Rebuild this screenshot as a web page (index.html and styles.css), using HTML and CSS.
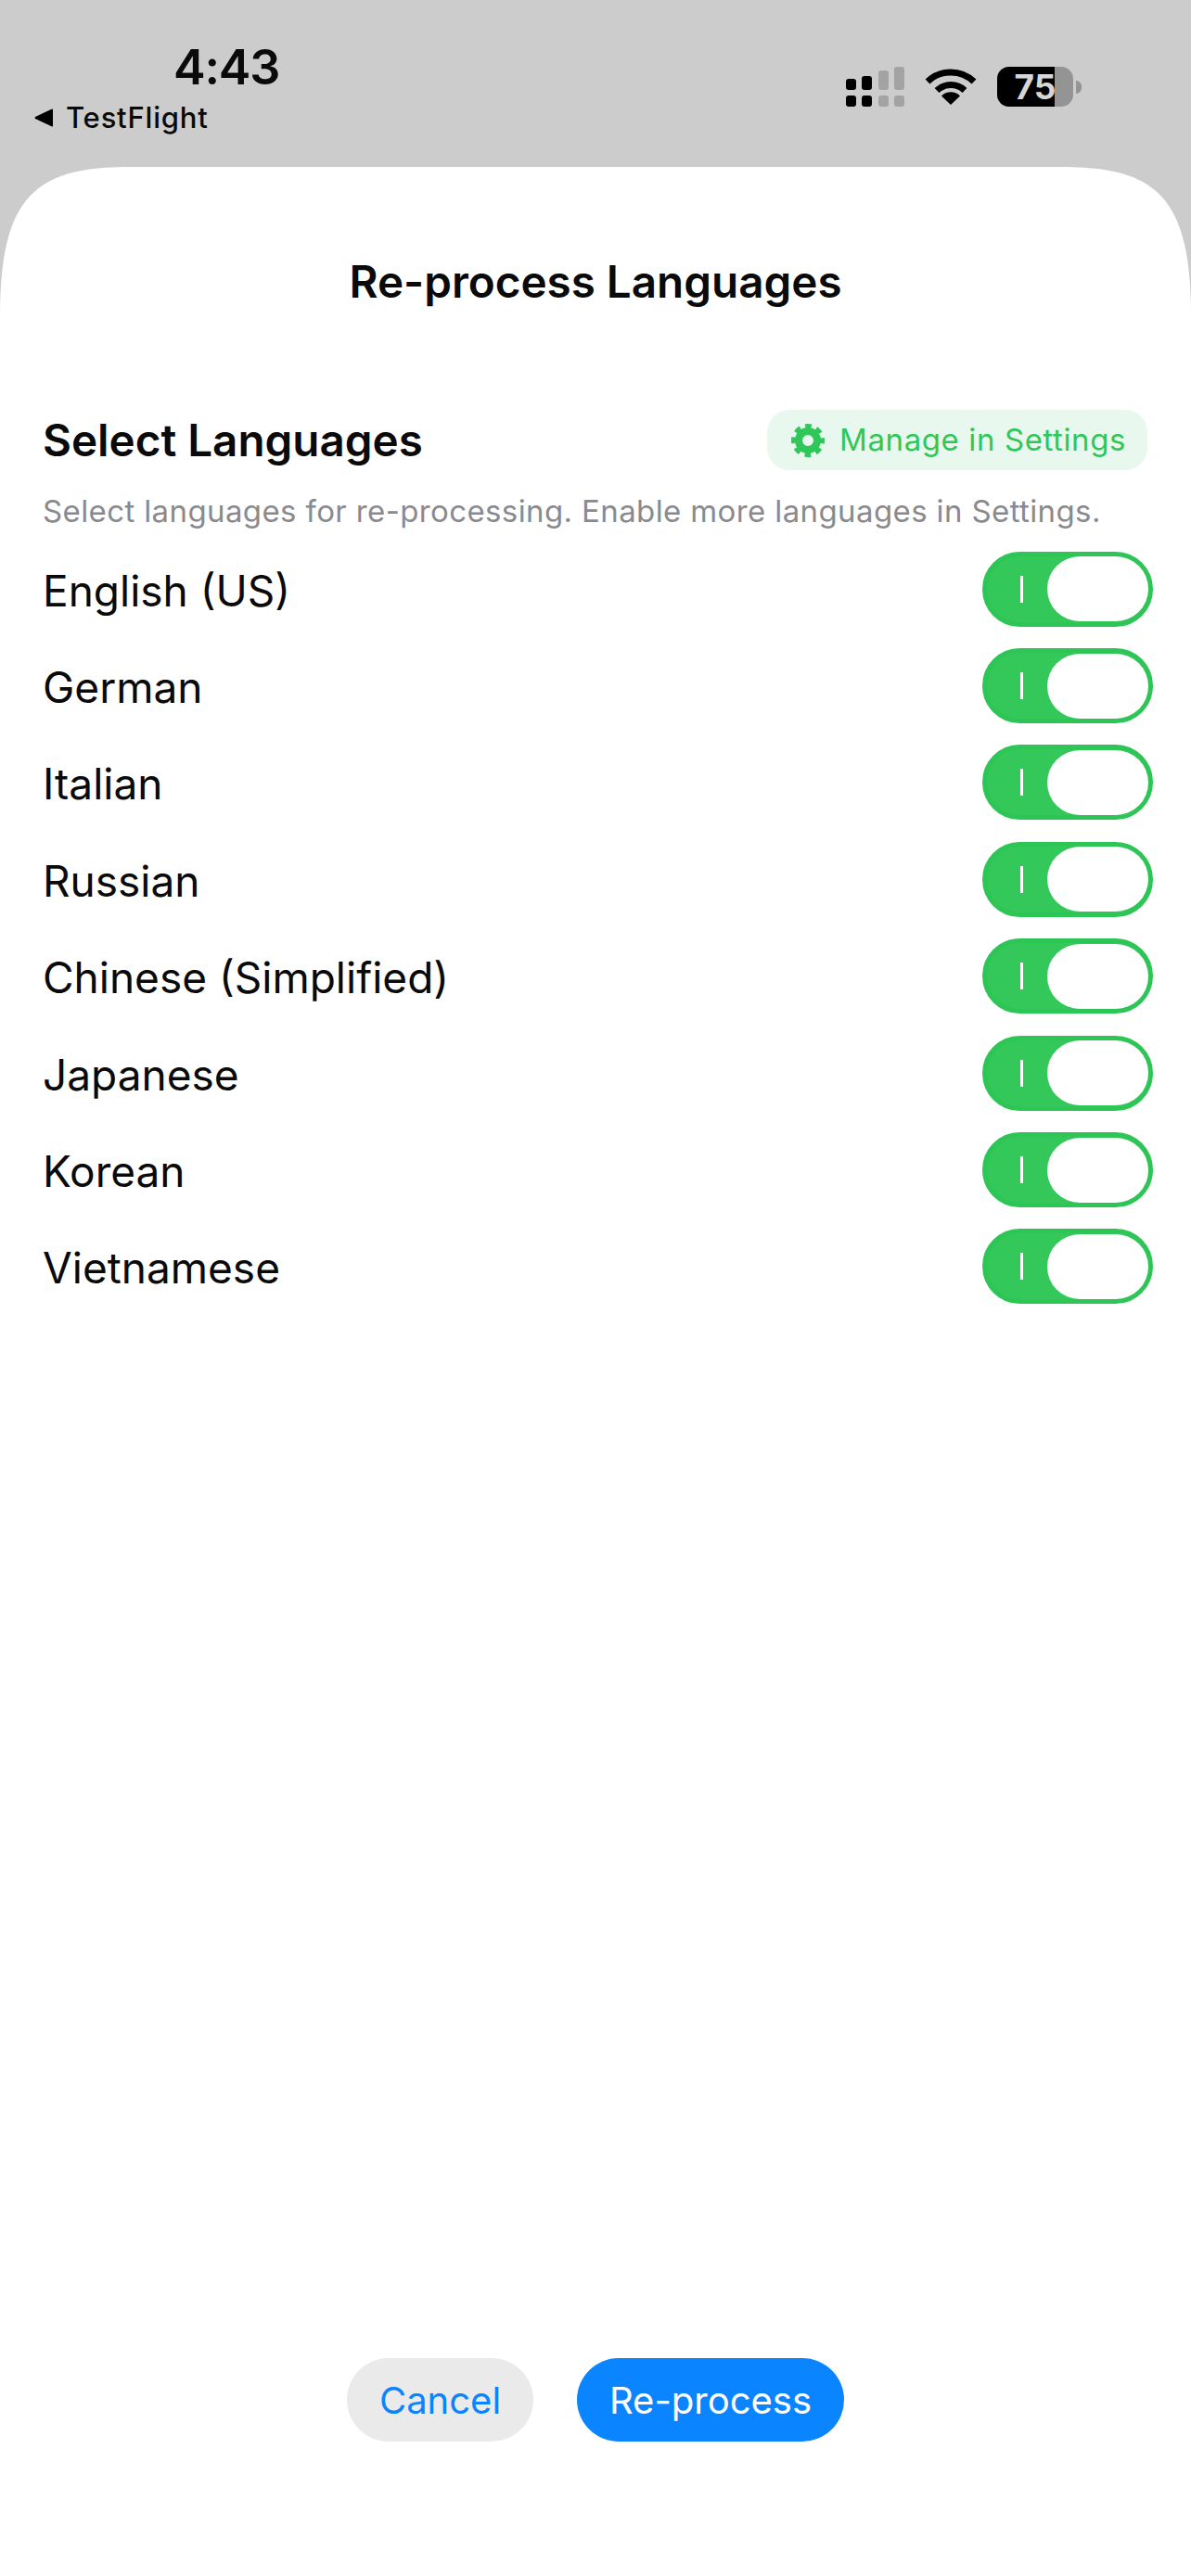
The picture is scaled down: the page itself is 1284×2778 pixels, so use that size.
FILE: index.html
```html
<!DOCTYPE html>
<html lang="en">
<head>
  <meta charset="UTF-8">
  <title>Re-process Languages</title>
  <link rel="stylesheet" href="styles.css">
</head>
<body>

  <div class="status-bar">
    <div class="status-left">
      <div class="time">4:43</div>
      <div class="back-link">
        <svg class="back-arrow" width="21" height="20" viewBox="0 0 21 20"><path d="M20 1.5 V18.5 Q20 20 18.5 19.2 L1 11 Q0 10 1 9 L18.5 .8 Q20 0 20 1.5 Z"/></svg>
        <span>TestFlight</span>
      </div>
    </div>
    <div class="status-right">
      <div class="signal">
        <div class="signal-col"><span class="bar h12"></span><span class="bar h12"></span></div>
        <div class="signal-col"><span class="bar h15"></span><span class="bar h12"></span></div>
        <div class="signal-col dim"><span class="bar h21"></span><span class="bar h12"></span></div>
        <div class="signal-col dim"><span class="bar h25"></span><span class="bar h12"></span></div>
      </div>
      <svg class="wifi" width="56" height="40" viewBox="0 0 56 40">
        <path d="M3 15 A36 36 0 0 1 53 15" fill="none" stroke="#000" stroke-width="7"/>
        <path d="M13 24.5 A22 22 0 0 1 43 24.5" fill="none" stroke="#000" stroke-width="7"/>
        <path d="M28 40 L18 30.5 A14 14 0 0 1 38 30.5 Z"/>
      </svg>
      <div class="battery">
        <div class="battery-body">
          <div class="battery-fill"></div>
          <span class="battery-text">75</span>
        </div>
        <div class="battery-nub"></div>
      </div>
    </div>
  </div>

  <div class="sheet">
    <h1 class="sheet-title">Re-process Languages</h1>

    <div class="section-head">
      <h2>Select Languages</h2>
      <button class="settings-btn">
        <svg width="36" height="36" viewBox="0 0 36 36" fill="none" stroke="#30c75a">
          <circle cx="18" cy="18" r="10" stroke-width="8"/>
          <circle cx="18" cy="18" r="15.5" stroke-width="5" stroke-dasharray="6.6 5.57" stroke-dashoffset="3.3"/>
        </svg>
        <span>Manage in Settings</span>
      </button>
    </div>
    <p class="hint">Select languages for re-processing. Enable more languages in Settings.</p>

    <div class="lang-list">
      <div class="lang-row"><span>English (US)</span><div class="toggle"><i class="tick"></i><b class="thumb"></b></div></div>
      <div class="lang-row"><span>German</span><div class="toggle"><i class="tick"></i><b class="thumb"></b></div></div>
      <div class="lang-row"><span>Italian</span><div class="toggle"><i class="tick"></i><b class="thumb"></b></div></div>
      <div class="lang-row"><span>Russian</span><div class="toggle"><i class="tick"></i><b class="thumb"></b></div></div>
      <div class="lang-row"><span>Chinese (Simplified)</span><div class="toggle"><i class="tick"></i><b class="thumb"></b></div></div>
      <div class="lang-row"><span>Japanese</span><div class="toggle"><i class="tick"></i><b class="thumb"></b></div></div>
      <div class="lang-row"><span>Korean</span><div class="toggle"><i class="tick"></i><b class="thumb"></b></div></div>
      <div class="lang-row"><span>Vietnamese</span><div class="toggle"><i class="tick"></i><b class="thumb"></b></div></div>
    </div>

    <div class="actions">
      <button class="btn btn-cancel">Cancel</button>
      <button class="btn btn-primary">Re-process</button>
    </div>
  </div>

</body>
</html>
```

FILE: styles.css
```css
* {
  box-sizing: border-box;
}

body {
  margin: 0;
  width: 1284px;
  height: 2778px;
  overflow: hidden;
  background-color: #cccccc;
  color: #0a0a0a;
  font-family: 'Inter', 'Liberation Sans', sans-serif;
  display: flex;
  flex-direction: column;
}

/* status bar */
.status-bar {
  height: 180px;
  flex: none;
  display: flex;
  justify-content: space-between;
  padding: 0 118px 0 37px;
}

.status-left {
  padding-top: 41px;
}

.time {
  margin-left: 150px;
  font-size: 52px;
  line-height: 64px;
  font-weight: 600;
  letter-spacing: -1.2px;
}

.back-link {
  display: flex;
  align-items: center;
  gap: 13px;
  margin-top: 2px;
  font-size: 31px;
  line-height: 40px;
  font-weight: 500;
  letter-spacing: 0.8px;
}

.back-arrow {
  flex: none;
}

.status-right {
  display: flex;
  align-items: flex-start;
  padding-top: 72px;
}

.signal {
  display: flex;
  gap: 6.7px;
  width: 63px;
}

.signal-col {
  width: 11px;
  height: 43px;
  display: flex;
  flex-direction: column;
  justify-content: flex-end;
  gap: 6px;
}

.signal-col.dim .bar {
  background-color: #a3a3a3;
}

.bar {
  display: block;
  background-color: #000;
  border-radius: 3px;
}

.h12 { height: 12px; }
.h15 { height: 15px; }
.h21 { height: 21px; }
.h25 { height: 25px; }

.wifi {
  margin: 1px 0 0 22px;
}

.battery {
  display: flex;
  align-items: center;
  margin-left: 22px;
}

.battery-body {
  position: relative;
  width: 82px;
  height: 43px;
  border-radius: 13px;
  background-color: #949494;
  overflow: hidden;
  text-align: center;
}

.battery-fill {
  position: absolute;
  left: 0;
  top: 0;
  bottom: 0;
  width: 62px;
  background-color: #000;
}

.battery-text {
  position: relative;
  display: block;
  color: #d6d6d6;
  font-size: 37px;
  line-height: 43px;
  font-weight: 700;
}

.battery-nub {
  width: 6px;
  height: 14px;
  margin-left: 3px;
  background-color: #949494;
  border-radius: 0 6px 6px 0;
}

/* sheet */
.sheet {
  flex: 1;
  background-color: #fff;
  clip-path: path("M0 160 C0 30 40 0 140 0 H1144 C1244 0 1284 30 1284 160 V2598 H0 Z");
  padding: 0 41px 145px 46px;
  display: flex;
  flex-direction: column;
}

.sheet-title {
  margin: 96px 5px 0 0;
  font-size: 47.6px;
  line-height: 56px;
  font-weight: 600;
  text-align: center;
}

.section-head {
  display: flex;
  justify-content: space-between;
  align-items: center;
  margin-top: 110px;
  padding-right: 6px;
}

.section-head h2 {
  margin: 0;
  font-size: 47.6px;
  font-weight: 600;
}

.settings-btn {
  display: flex;
  align-items: center;
  gap: 16px;
  width: 410px;
  height: 65px;
  padding: 0 0 0 26px;
  border: none;
  border-radius: 24px;
  background-color: #e9f8ee;
  color: #30c75a;
  font-family: inherit;
  font-size: 33px;
  letter-spacing: 0.6px;
}

.settings-btn span {
  padding-bottom: 2px;
}

.hint {
  margin: 24px 0 0;
  color: #8a8a8e;
  font-size: 33px;
  line-height: 40px;
  letter-spacing: 0.38px;
}

.lang-list {
  margin-top: 12px;
}

.lang-row {
  display: flex;
  justify-content: space-between;
  align-items: center;
  height: 104.4px;
  font-size: 46px;
}

.lang-row span {
  padding-top: 3px;
}

.toggle {
  width: 184px;
  height: 81px;
  padding-left: 36px;
  display: flex;
  align-items: center;
  justify-content: space-between;
  background-color: #34c85a;
  border: 5px solid #2ec557;
  border-radius: 41px;
}

.tick {
  width: 3px;
  height: 29px;
  background-color: #fff;
}

.thumb {
  width: 109px;
  height: 70px;
  background-color: #fff;
  border-radius: 35px;
}

.actions {
  margin-top: auto;
  display: flex;
  justify-content: center;
  gap: 47px;
  padding-right: 5px;
}

.btn {
  height: 90px;
  border: none;
  border-radius: 45px;
  font-family: inherit;
  font-size: 40px;
}

.btn-cancel {
  width: 201px;
  background-color: #eaeaea;
  color: #0a84ff;
}

.btn-primary {
  width: 288px;
  background-color: #0a84ff;
  color: #fff;
}
```
